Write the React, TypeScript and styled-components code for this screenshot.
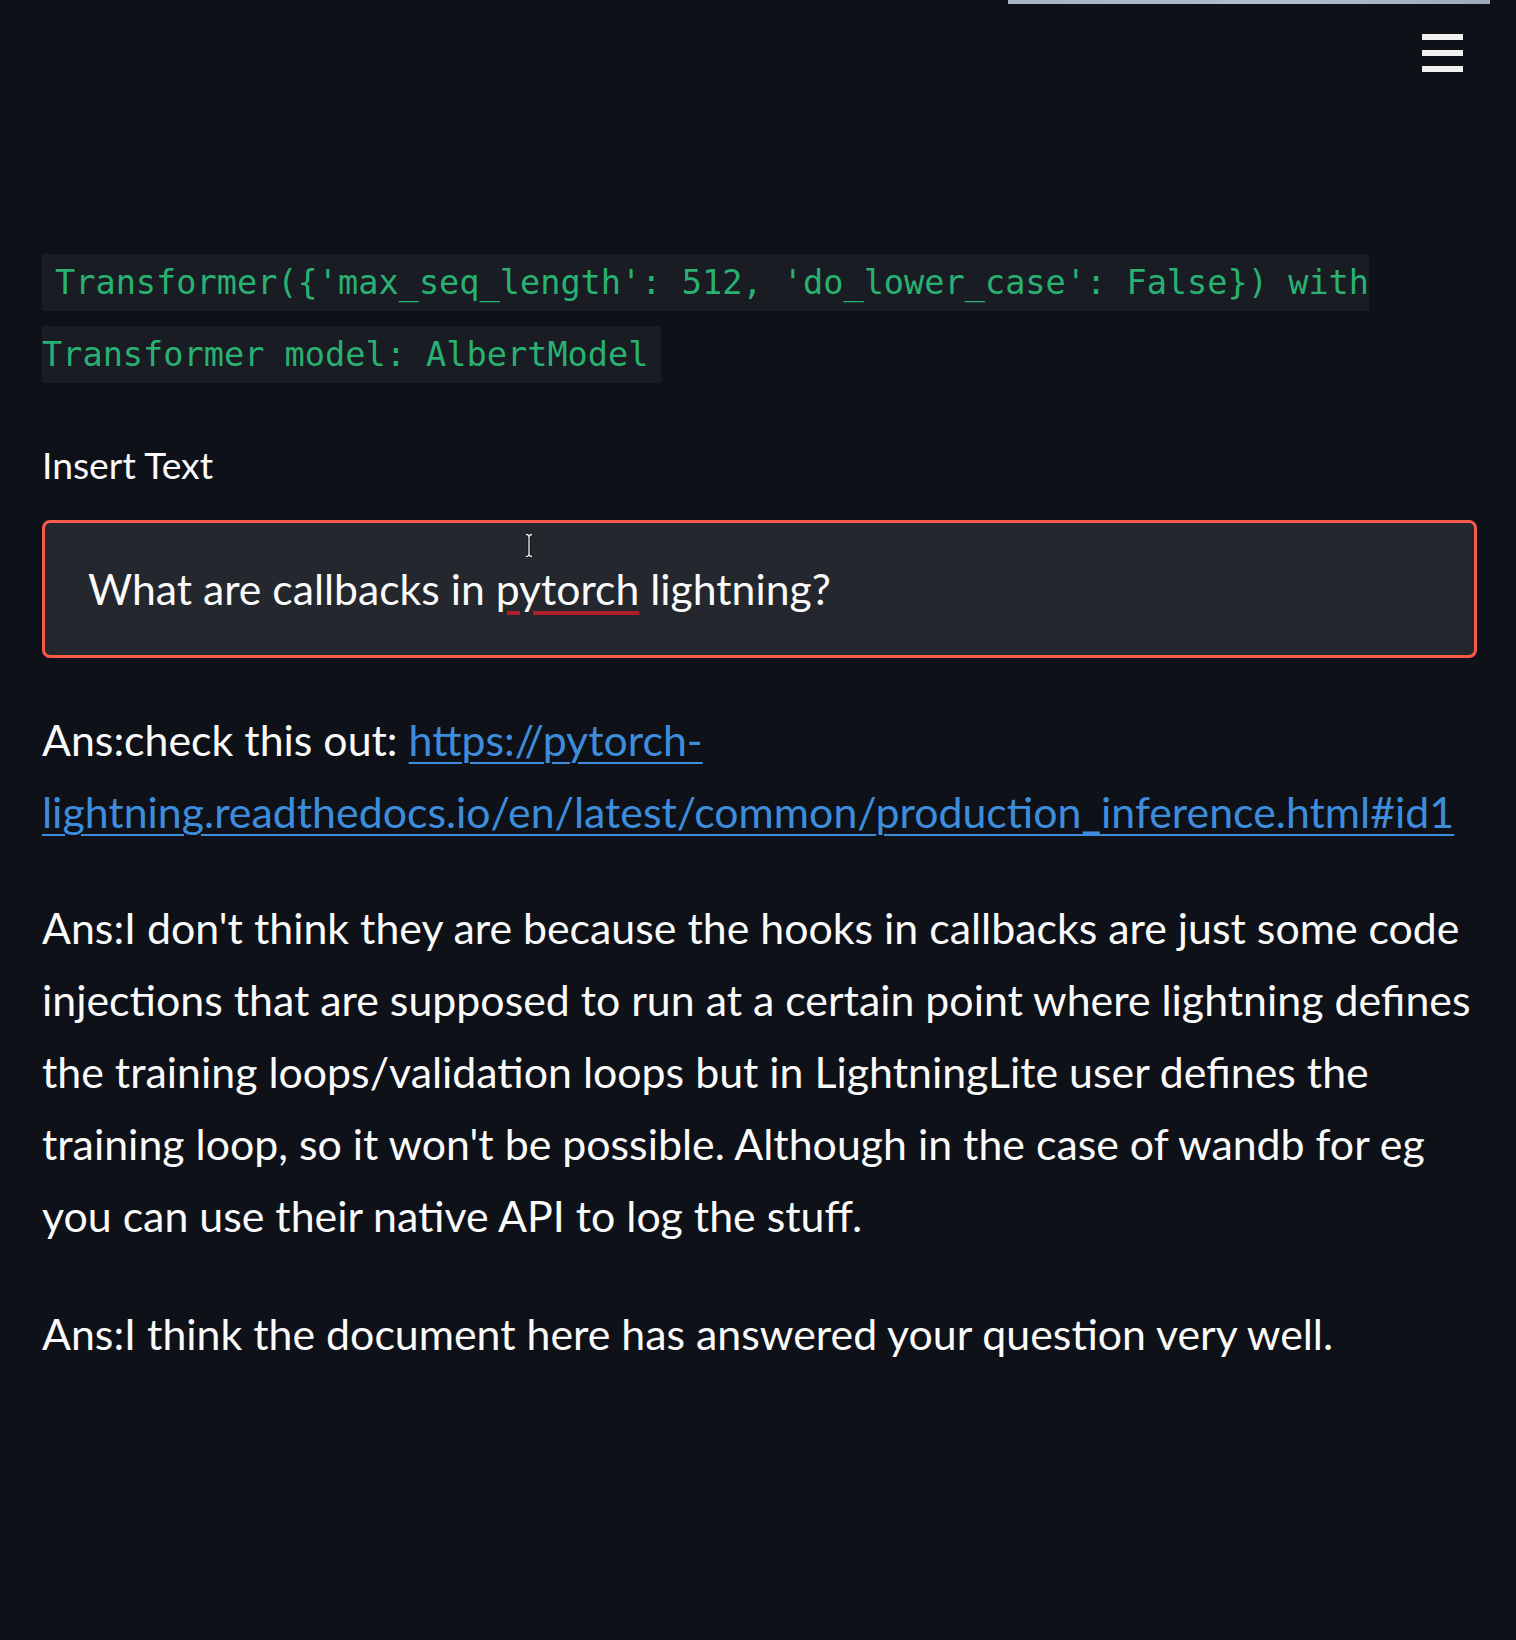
import React from "react";
import styled, { createGlobalStyle } from "styled-components";

const GlobalStyle = createGlobalStyle`
  html, body {
    margin: 0;
    padding: 0;
    background: #0e1117;
  }
  body {
    font-family: Lato, "Noto Sans", sans-serif;
    color: #fafafa;
  }
`;

const Page = styled.div`
  min-height: 1640px;
  background: #0e1117;
`;

const Header = styled.header`
  display: flex;
  flex-direction: column;
  align-items: flex-end;
`;

const TopStrip = styled.div`
  width: 482px;
  height: 4px;
  margin-right: 26px;
  background: linear-gradient(90deg, #a9b3c2, #b3bccb 60%, #9ea9b9);
`;

const MenuButton = styled.button`
  display: flex;
  flex-direction: column;
  gap: 10px;
  margin: 30px 53px 0 0;
  padding: 0;
  border: none;
  background: transparent;
  cursor: pointer;
`;

const MenuBar = styled.span`
  display: block;
  width: 41px;
  height: 6px;
  background: #f2f2f2;
`;

const Main = styled.main`
  display: flex;
  flex-direction: column;
  padding: 0 39px 0 42px;
  margin-top: 170px;
`;

const Paragraph = styled.p<{ $top?: number }>`
  margin: ${(p) => p.$top ?? 0}px 0 0 0;
  font-size: 42.85px;
  line-height: 72px;
  color: #fafafa;
`;

const InlineCode = styled.code`
  font-family: "DejaVu Sans Mono", "Liberation Mono", monospace;
  font-size: 33.6px;
  line-height: 40px;
  color: #28b172;
  background: #1a1c23;
  padding: 9px 13px;
`;

const Label = styled.label`
  display: block;
  margin-top: 47px;
  font-size: 37.3px;
  line-height: 63px;
  color: #fafafa;
`;

const FieldWrap = styled.div`
  position: relative;
  margin-top: 24px;
`;

const Field = styled.div`
  box-sizing: border-box;
  display: flex;
  align-items: center;
  height: 138px;
  padding-left: 43px;
  border: 3px solid #f75b48;
  border-radius: 8px;
  background: #25272e;
  font-size: 42.7px;
  line-height: 54px;
  color: #fafafa;
  white-space: pre;
`;

const Misspelled = styled.span`
  text-decoration: underline;
  text-decoration-color: #ad2029;
  text-decoration-thickness: 4px;
  text-underline-offset: 6px;
`;

const Cursor = styled.svg`
  position: absolute;
  left: 482px;
  top: 13px;
  width: 10px;
  height: 25px;
`;

const Link = styled.a`
  color: #3d8ddc;
  text-decoration: underline;
  text-decoration-thickness: 2px;
  text-underline-offset: 6px;
`;

export default function App() {
  return (
    <Page>
      <GlobalStyle />
      <Header>
        <TopStrip />
        <MenuButton aria-label="menu">
          <MenuBar />
          <MenuBar />
          <MenuBar />
        </MenuButton>
      </Header>
      <Main>
        <Paragraph>
          <InlineCode>
            Transformer({"{"}'max_seq_length': 512, 'do_lower_case': False{"}"}) with Transformer model: AlbertModel
          </InlineCode>
        </Paragraph>
        <Label>Insert Text</Label>
        <FieldWrap>
          <Field>
            {"What are callbacks in "}
            <Misspelled>pytorch</Misspelled>
            {" lightning?"}
          </Field>
          <Cursor viewBox="0 0 10 25">
            <path
              d="M2 1.5 Q5 1.5 5 4 Q5 1.5 8 1.5 M5 4 V21 M2 23.5 Q5 23.5 5 21 Q5 23.5 8 23.5"
              fill="none"
              stroke="#111"
              strokeWidth="3"
            />
            <path
              d="M2 1.5 Q5 1.5 5 4 Q5 1.5 8 1.5 M5 4 V21 M2 23.5 Q5 23.5 5 21 Q5 23.5 8 23.5"
              fill="none"
              stroke="#f5f5f5"
              strokeWidth="1.3"
            />
          </Cursor>
        </FieldWrap>
        <Paragraph $top={46}>
          Ans:check this out:{" "}
          <Link href="#">
            https://pytorch-lightning.readthedocs.io/en/latest/common/production_inference.html#id1
          </Link>
        </Paragraph>
        <Paragraph $top={44}>
          Ans:I don't think they are because the hooks in callbacks are just some code injections that are
          supposed to run at a certain point where lightning defines the training loops/validation loops but in
          LightningLite user defines the training loop, so it won't be possible. Although in the case of wandb for
          eg you can use their native API to log the stuff.
        </Paragraph>
        <Paragraph $top={46}>Ans:I think the document here has answered your question very well.</Paragraph>
      </Main>
    </Page>
  );
}
